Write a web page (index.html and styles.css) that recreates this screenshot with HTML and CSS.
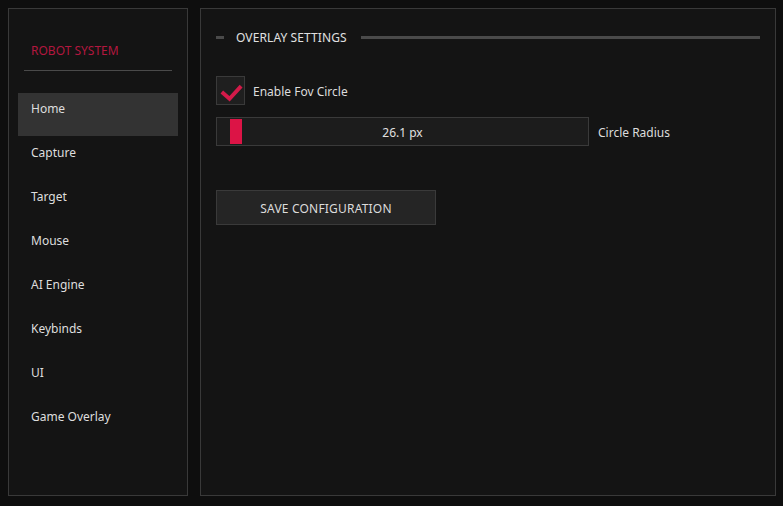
FILE: index.html
```html
<!DOCTYPE html>
<html lang="en">
  <head>
    <meta charset="UTF-8" />
    <meta name="viewport" content="width=device-width, initial-scale=1.0" />
    <title>Robot System</title>
    <link rel="stylesheet" href="styles.css">
  </head>
  <body>
    <div class="app">
      <aside class="sidebar">
        <div class="brand">ROBOT SYSTEM</div>
        <div class="brand-line"></div>
        <nav class="nav">
          <div class="nav-item active">Home</div>
          <div class="nav-item">Capture</div>
          <div class="nav-item">Target</div>
          <div class="nav-item">Mouse</div>
          <div class="nav-item">AI Engine</div>
          <div class="nav-item">Keybinds</div>
          <div class="nav-item">UI</div>
          <div class="nav-item">Game Overlay</div>
        </nav>
      </aside>

      <main class="content">
        <div class="section-head">
          <span class="dash"></span>
          <span class="section-title">OVERLAY SETTINGS</span>
          <span class="rule"></span>
        </div>

        <div class="row check-row">
          <div class="checkbox">
            <svg width="28" height="28" viewBox="0 0 28 28">
              <polyline points="5,15 13,22 25,9" fill="none" stroke="#d31a49" stroke-width="4" stroke-linejoin="miter" />
            </svg>
          </div>
          <span class="label">Enable Fov Circle</span>
        </div>

        <div class="row slider-row">
          <div class="slider">
            <div class="thumb"></div>
            <span class="value">26.1 px</span>
          </div>
          <span class="label">Circle Radius</span>
        </div>

        <button class="save-btn">SAVE CONFIGURATION</button>
      </main>
    </div>
  </body>
</html>
```

FILE: styles.css
```css
html,
body {
  margin: 0;
  height: 100%;
}

body {
  background-color: #0e0e0e;
  color: #dcdcdc;
  font-family: "Noto Sans", "Open Sans", sans-serif;
  font-size: 12px;
}

.app {
  display: flex;
  gap: 12px;
  padding: 8px 7px 10px 8px;
  height: 100%;
  box-sizing: border-box;
}

.sidebar {
  width: 180px;
  flex-shrink: 0;
  background-color: #141414;
  border: 1px solid #393939;
  box-sizing: border-box;
  padding: 0 9px;
}

.brand {
  color: #b3173f;
  margin: 34px 0 0 13px;
  line-height: 16px;
}

.brand-line {
  height: 1px;
  background-color: #4a4a4a;
  margin: 11px 6px 0 6px;
}

.nav {
  margin-top: 22px;
}

.nav-item {
  height: 44px;
  line-height: 31px;
  padding-left: 13px;
  color: #dedede;
  font-size: 12px;
}

.nav-item.active {
  background-color: #333333;
  height: 43px;
  margin-bottom: 1px;
}

.content {
  flex: 1;
  background-color: #141414;
  border: 1px solid #393939;
  box-sizing: border-box;
  padding: 0 15px;
}

.section-head {
  display: flex;
  align-items: center;
  height: 20px;
  margin-top: 18px;
}

.dash {
  width: 8px;
  height: 3px;
  background-color: #4a4a4a;
}

.section-title {
  margin: 0 14px 0 12px;
  color: #e0e0e0;
  letter-spacing: 0.1px;
}

.rule {
  flex: 1;
  height: 3px;
  background-color: #4a4a4a;
}

.row {
  display: flex;
  align-items: center;
}

.check-row {
  margin-top: 29px;
  gap: 8px;
}

.checkbox {
  width: 29px;
  height: 29px;
  box-sizing: border-box;
  border: 1px solid #3a3a3a;
  background-color: #1f1f1f;
  display: flex;
  align-items: center;
  justify-content: center;
}

.label {
  color: #dcdcdc;
  padding-top: 1px;
}

.slider-row {
  margin-top: 12px;
  gap: 9px;
}

.slider {
  position: relative;
  width: 373px;
  height: 29px;
  box-sizing: border-box;
  border: 1px solid #3a3a3a;
  background-color: #1c1c1c;
  display: flex;
  align-items: center;
  justify-content: center;
}

.thumb {
  position: absolute;
  left: 13px;
  top: 1px;
  width: 12px;
  height: 25px;
  background-color: #dc1446;
}

.value {
  color: #e0e0e0;
  padding-top: 1px;
}

.save-btn {
  display: block;
  margin-top: 44px;
  width: 220px;
  height: 35px;
  background-color: #252525;
  border: 1px solid #3a3a3a;
  color: #dcdcdc;
  font-family: inherit;
  font-size: 12px;
  letter-spacing: 0.2px;
  padding-top: 2px;
  cursor: pointer;
}
```
